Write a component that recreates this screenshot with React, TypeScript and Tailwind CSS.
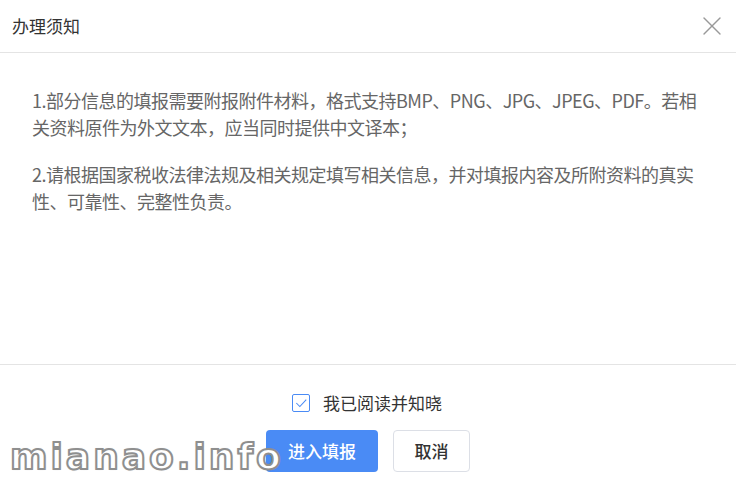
import { X } from 'lucide-react';

const font = "font-['Noto_Sans_CJK_SC','Noto_Sans',sans-serif]";

export default function App() {
  return (
    <div className={`relative flex h-[496px] w-[736px] flex-col bg-white ${font}`}>
      {/* Header */}
      <div className="flex h-[53px] items-center justify-between border-b border-[#e4e4e4] pl-3 pr-2">
        <span className="text-[17px] text-[#333]">办理须知</span>
        <X className="h-[32px] w-[32px] text-[#999]" strokeWidth={1} />
      </div>

      {/* Body */}
      <div className="flex-1 pl-8 pr-[30px] pt-[34px] text-[18px] leading-[27px] tracking-[-0.5px] text-[#666]">
        <p className="mb-[20px]">
          1.部分信息的填报需要附报附件材料，格式支持BMP、PNG、JPG、JPEG、PDF。若相关资料原件为外文文本，应当同时提供中文译本；
        </p>
        <p>
          2.请根据国家税收法律法规及相关规定填写相关信息，并对填报内容及所附资料的真实性、可靠性、完整性负责。
        </p>
      </div>

      {/* Footer */}
      <div className="flex flex-col items-center border-t border-[#e4e4e4] pb-6 pt-[29px]">
        <label className="flex h-[18px] items-center gap-[13px] pr-[2px]">
          <span className="flex h-[18px] w-[18px] items-center justify-center rounded-[2px] border border-[#4a8bf5]">
            <svg viewBox="0 0 12 12" className="h-[14px] w-[14px]">
              <path d="M2 6 L5 9 L10.5 3.2" fill="none" stroke="#4a8bf5" strokeWidth="0.9" />
            </svg>
          </span>
          <span className="text-[17px] text-[#333]">我已阅读并知晓</span>
        </label>
        <div className="mt-[18px] flex gap-[15px]">
          <button className="h-[42px] w-[112px] rounded-[4px] bg-[#4a8bf5] text-[17px] font-medium text-white">
            进入填报
          </button>
          <button className="h-[42px] w-[77px] rounded-[4px] border border-[#dcdfe6] bg-white text-[17px] font-medium text-[#333]">
            取消
          </button>
        </div>
      </div>

      {/* Watermark */}
      <div className="pointer-events-none absolute left-[10px] top-[430px] font-['DejaVu_Sans',sans-serif] text-[36px] font-bold tracking-[3px] text-white [-webkit-text-stroke:2px_#8f8f8f] [text-shadow:0_0_2px_rgba(0,0,0,0.3)]">
        mianao.info
      </div>
    </div>
  );
}
